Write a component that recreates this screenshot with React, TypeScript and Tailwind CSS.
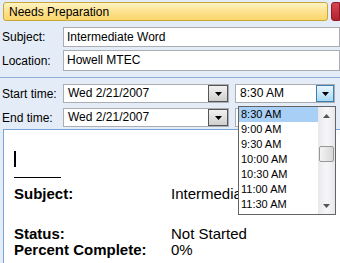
import React from 'react';

const TIMES = ['8:30 AM', '9:00 AM', '9:30 AM', '10:00 AM', '10:30 AM', '11:00 AM', '11:30 AM'];

function Arrow({ className = '' }: { className?: string }) {
  return (
    <svg width="7" height="4" viewBox="0 0 7 4" className={className}>
      <path d="M0 0h7L3.5 4z" fill="currentColor" />
    </svg>
  );
}

function DateCombo({ value }: { value: string }) {
  return (
    <div className="flex h-[19px] w-[166px] border border-[#abadb3] bg-white">
      <div className="flex-1 pl-[4px] text-[12px] leading-[17px] text-black">{value}</div>
      <div className="flex w-[20px] items-center justify-center border border-[#555] bg-gradient-to-b from-[#f2f2f2] to-[#cfcfcf] text-black">
        <Arrow />
      </div>
    </div>
  );
}

export default function App() {
  return (
    <div className="relative h-[263px] w-[340px] overflow-hidden bg-[#e4ecf7] font-['Liberation_Sans',sans-serif]">
      {/* Tabs */}
      <div className="flex h-[25px] items-start gap-[3px] pl-[3px] pt-[2px]">
        <div className="flex h-[19px] w-[325px] items-center rounded-[3px] border border-[#c9a53a] bg-gradient-to-b from-[#fff4c4] via-[#fde28f] to-[#fbd66a] pl-[5px] text-[12px] text-black">
          Needs Preparation
        </div>
        <div className="h-[19px] flex-1 rounded-l-[3px] border border-[#8e1a24] bg-gradient-to-b from-[#d8454f] to-[#b3222d]" />
      </div>

      {/* Subject / Location */}
      <div className="flex flex-col gap-[3px] pt-[2px]">
        <div className="flex h-[20px] items-center">
          <div className="w-[63px] pl-[2px] text-[12px] text-black">Subject:</div>
          <div className="h-full flex-1 border border-[#abadb3] bg-white pl-[3px] text-[12px] leading-[18px] text-black">
            Intermediate Word
          </div>
        </div>
        <div className="flex h-[21px] items-center">
          <div className="w-[63px] pl-[2px] text-[12px] text-black">Location:</div>
          <div className="h-full flex-1 border border-[#abadb3] bg-white pl-[3px] text-[12px] leading-[19px] text-black">
            Howell MTEC
          </div>
        </div>
      </div>

      <div className="mt-[6px] h-px w-full bg-[#8fb0db]" />

      {/* Times */}
      <div className="flex flex-col gap-[5px] pt-[6px]">
        <div className="flex items-center">
          <div className="w-[63px] pl-[2px] text-[12px] text-black">Start time:</div>
          <DateCombo value="Wed 2/21/2007" />
          <div className="ml-[6px] flex h-[19px] w-[100px] border border-[#abadb3] bg-white">
            <div className="flex-1 pl-[4px] text-[12px] leading-[17px] text-black">8:30 AM</div>
            <div className="flex w-[18px] items-center justify-center border border-[#3c7fb1] bg-gradient-to-b from-[#eaf6fd] to-[#a7d9f5] text-black">
              <Arrow />
            </div>
          </div>
        </div>
        <div className="flex items-center">
          <div className="w-[63px] pl-[2px] text-[12px] text-black">End time:</div>
          <DateCombo value="Wed 2/21/2007" />
          <div className="ml-[6px] h-[19px] w-[100px] border border-[#abadb3] bg-white" />
        </div>
      </div>

      {/* Body */}
      <div className="ml-[3px] mt-[2px] h-[200px] border-l border-t border-[#7aa3d6] bg-white pl-[10px] pt-[21px] text-black">
        <div className="h-[16px] w-[2px] bg-black" />
        <div className="mt-[10px] h-px w-[47px] bg-black" />
        <div className="mt-[8px] flex text-[15px] leading-[16px]">
          <div className="w-[157px] font-bold">Subject:</div>
          <div>Intermediate Word</div>
        </div>
        <div className="mt-[24px] flex text-[15px] leading-[16px]">
          <div className="w-[157px] font-bold">Status:</div>
          <div>Not Started</div>
        </div>
        <div className="flex text-[15px] leading-[16px]">
          <div className="w-[157px] font-bold">Percent Complete:</div>
          <div>0%</div>
        </div>
      </div>

      {/* Dropdown list */}
      <div className="absolute left-[238px] top-[106px] flex h-[109px] w-[98px] border border-[#646464] bg-white">
        <div className="flex flex-1 flex-col">
          {TIMES.map((t, i) => (
            <div
              key={t}
              className={`h-[15px] pl-[2px] text-[11px] leading-[15px] text-black ${i === 0 ? 'bg-[#a8cff5]' : ''}`}
            >
              {t}
            </div>
          ))}
        </div>
        <div className="flex w-[17px] flex-col items-center bg-gradient-to-r from-[#e8e8ec] via-[#f7f5f8] to-[#e8e8ec]">
          <div className="flex h-[17px] items-center justify-center text-[#555]">
            <Arrow className="rotate-180" />
          </div>
          <div className="mt-[22px] h-[16px] w-[15px] rounded-[2px] border border-[#979797] bg-gradient-to-r from-[#f3f3f3] to-[#d8d8d8]" />
          <div className="flex-1" />
          <div className="flex h-[17px] items-center justify-center text-[#555]">
            <Arrow />
          </div>
        </div>
      </div>
    </div>
  );
}
